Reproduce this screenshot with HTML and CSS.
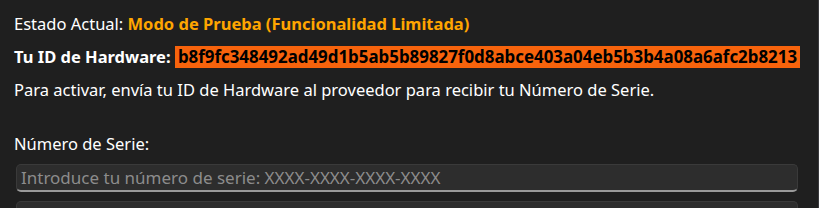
FILE: index.html
```html
<!DOCTYPE html>
<html lang="es">
<head>
  <meta charset="UTF-8" />
  <title>Activación</title>
  <link rel="stylesheet" href="styles.css">
</head>
<body>
  <div class="panel">
    <p class="line">Estado Actual: <span class="status">Modo de Prueba (Funcionalidad Limitada)</span></p>
    <p class="line hw"><b>Tu ID de Hardware:</b> <span class="hwid">b8f9fc348492ad49d1b5ab5b89827f0d8abce403a04eb5b3b4a08a6afc2b8213</span></p>
    <p class="line">Para activar, envía tu ID de Hardware al proveedor para recibir tu Número de Serie.</p>

    <label class="serial-label" for="serial">Número de Serie:</label>
    <input type="text" id="serial" class="field" placeholder="Introduce tu número de serie: XXXX-XXXX-XXXX-XXXX" />
    <input type="text" class="field" />
  </div>
</body>
</html>
```

FILE: styles.css
```css
html, body {
  margin: 0;
  height: 100%;
}

body {
  background: #1f1f1f;
  color: #ffffff;
  font-family: "Noto Sans", "Open Sans", sans-serif;
  font-size: 16.5px;
  overflow: hidden;
  border-right: 1px solid #3a3a3e;
}

.panel {
  padding: 13px 0 0 14px;
  display: flex;
  flex-direction: column;
  width: 784px;
}

.line {
  margin: 0;
  height: 33px;
  line-height: 22px;
  white-space: nowrap;
}

.status {
  color: #ffa500;
  font-weight: bold;
}

.hw b {
  font-weight: bold;
}

.hwid {
  display: inline-block;
  background: #f7630c;
  color: #000000;
  font-size: 16.9px;
  font-weight: bold;
  height: 22px;
  line-height: 22px;
  padding: 0 3px;
}

.serial-label {
  margin-top: 21px;
  line-height: 22px;
}

.field {
  margin: 9px 0 0 2px;
  height: 28px;
  box-sizing: border-box;
  background: #2d2d2d;
  border: 1px solid #3a3a3a;
  border-bottom: 2px solid #9a9a9a;
  border-radius: 5px;
  color: #ffffff;
  font: inherit;
  font-size: 17px;
  padding: 0 4px;
}

.field::placeholder {
  color: #8c8c8c;
}
```
